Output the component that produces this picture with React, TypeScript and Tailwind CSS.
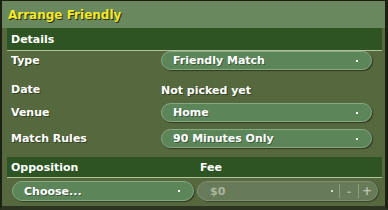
const font = { fontFamily: '"DejaVu Sans", Verdana, sans-serif' };

function Select({ label, className = "" }: { label: string; className?: string }) {
  return (
    <div
      className={`flex h-[19px] items-center justify-between rounded-full border border-[#86a981] bg-[#5c865a] pl-[11px] pr-[13px] shadow-[1px_1px_1px_rgba(0,0,0,0.45)] ${className}`}
    >
      <span className="text-[11px] font-bold leading-none text-white [text-shadow:1px_1px_0_rgba(0,0,0,0.35)]">
        {label}
      </span>
      <span className="h-[2px] w-[2px] bg-white" />
    </div>
  );
}

function Row({ label, children }: { label: string; children: React.ReactNode }) {
  return (
    <div className="grid h-[19px] grid-cols-[154px_1fr] items-center">
      <span className="pl-[4px] text-[11px] font-bold leading-none text-white [text-shadow:1px_1px_0_rgba(0,0,0,0.4)]">
        {label}
      </span>
      <div className="pr-[10px]">{children}</div>
    </div>
  );
}

function Band({ children }: { children: React.ReactNode }) {
  return (
    <div className="flex items-center border-b border-[#b3c29a] bg-[#2e5423] text-[11px] font-bold leading-none text-white">
      {children}
    </div>
  );
}

export default function App() {
  return (
    <div
      style={font}
      className="h-[210px] w-[388px] overflow-hidden border-b-[4px] border-l-2 border-r-[3px] border-t border-b-[#2c3321] border-l-[#1b2012] border-r-[#1b2012] border-t-[#1b2012] bg-[#56683d]"
    >
      <div className="flex h-[27px] items-center bg-[#6a885d] pl-[6px]">
        <span className="text-[12px] font-bold text-[#f4ea2a] [text-shadow:1px_1px_0_#2b2e12]">
          Arrange Friendly
        </span>
      </div>

      <div className="pl-[5px] pr-[3px]">
        <div className="h-[22px]">
          <Band>
            <span className="flex h-[22px] items-center pl-[4px]">Details</span>
          </Band>
        </div>

        <div className="mt-[1px] flex flex-col gap-[7px]">
          <Row label="Type">
            <Select label="Friendly Match" />
          </Row>
          <Row label="Date">
            <span className="text-[11px] font-bold leading-none text-white [text-shadow:1px_1px_0_rgba(0,0,0,0.4)]">
              Not picked yet
            </span>
          </Row>
          <Row label="Venue">
            <Select label="Home" />
          </Row>
          <Row label="Match Rules">
            <Select label="90 Minutes Only" />
          </Row>
        </div>

        <div className="mt-[9px]">
          <Band>
            <div className="grid h-[20px] w-full grid-cols-[190px_1fr] items-center">
              <span className="pl-[4px]">Opposition</span>
              <span className="pl-[3px]">Fee</span>
            </div>
          </Band>
        </div>

        <div className="mt-[3px] grid grid-cols-[190px_1fr] items-center">
          <div className="pl-[5px] pr-[3px]">
            <Select label="Choose..." className="h-[20px]" />
          </div>
          <div className="pr-[4px]">
            <div className="flex h-[20px] items-center rounded-full border border-[#7e9070] bg-[#687b58] pl-[12px] shadow-[1px_1px_1px_rgba(0,0,0,0.35)]">
              <span className="flex-1 text-[11px] font-bold leading-none text-[#a7b59c]">$0</span>
              <span className="mr-[6px] h-[2px] w-[2px] bg-[#d8e0d0]" />
              <span className="h-[14px] w-px bg-[#8c9d80]" />
              <span className="w-[18px] text-center text-[11px] font-bold leading-none text-[#a7b59c]">-</span>
              <span className="h-[14px] w-px bg-[#8c9d80]" />
              <span className="w-[18px] pr-[2px] text-center text-[12px] font-bold leading-none text-[#b9c4b0]">+</span>
            </div>
          </div>
        </div>
      </div>
    </div>
  );
}
